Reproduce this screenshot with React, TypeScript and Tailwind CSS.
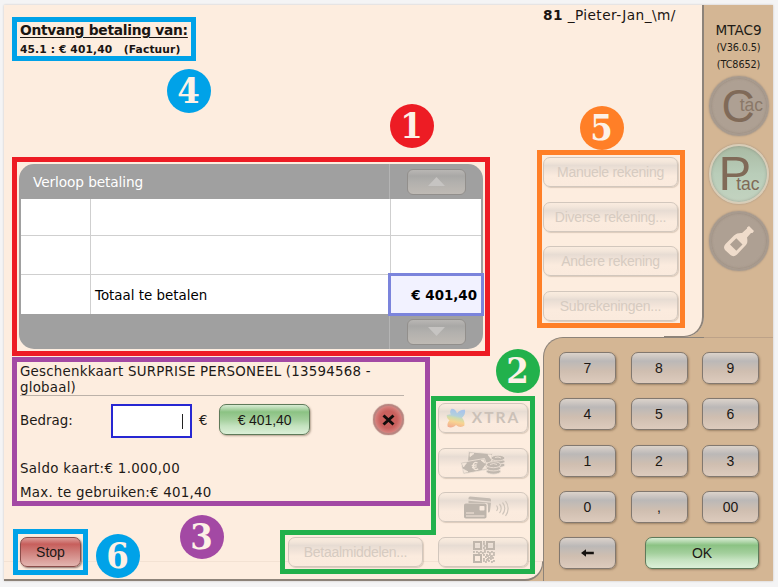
import React from "react";

const verdana = "font-['DejaVu_Sans',Verdana,sans-serif]";
const arial = "font-['Liberation_Sans',Arial,sans-serif]";

const greyKey =
  "border border-[#82786f] bg-[linear-gradient(#dcd3ca_0%,#d0c9c4_10%,#bbb8b7_27%,#c6bcb4_45%,#cfbeb0_60%,#ddcbbd_100%)] shadow-[1px_1px_2px_rgba(90,70,50,0.45)]";
const greenKey =
  "border border-[#5f7a5a] bg-[linear-gradient(#d8ecd4_0%,#b4d8ae_12%,#8bc283_24%,#a3cf9c_50%,#c4e2bf_72%,#dcf0d8_100%)] shadow-[1px_1px_2px_rgba(90,70,50,0.45)]";
const fadedKey =
  "border border-[#d2c7bd] bg-[linear-gradient(#faecdf_0%,#f3e6da_14%,#e7dcd3_27%,#f1e3d8_45%,#fbebde_65%,#faeadd_100%)] shadow-[1px_1px_1px_rgba(120,100,80,0.25)]";

function Key({ children, tone = greyKey, className = "" }: { children: React.ReactNode; tone?: string; className?: string }) {
  return (
    <button
      className={`flex items-center justify-center whitespace-nowrap rounded-[7px] text-[14px] leading-none text-[#1c1815] ${arial} ${tone} ${className}`}
    >
      {children}
    </button>
  );
}

function Badge({ n, className }: { n: number; className: string }) {
  return (
    <div
      className={`absolute z-30 flex size-[43.5px] items-center justify-center rounded-full text-[36px] font-bold leading-none text-[#fdf1e6] font-['DejaVu_Serif',serif] ${className}`}
    >
      <span className="-mt-px scale-x-90">{n}</span>
    </div>
  );
}

function Marker({ className }: { className: string }) {
  return <div className={`pointer-events-none absolute z-20 border-[5px] ${className}`} />;
}

function XtraMark() {
  return (
    <svg width="20" height="20" viewBox="0 0 20 20">
      <defs>
        <linearGradient id="petals" x1="0.2" y1="0" x2="0" y2="1">
          <stop offset="0" stopColor="#a9c4ea" />
          <stop offset="0.3" stopColor="#b3d0dc" />
          <stop offset="0.42" stopColor="#cfdcae" />
          <stop offset="0.62" stopColor="#f8d592" />
          <stop offset="1" stopColor="#f1a58f" />
        </linearGradient>
      </defs>
      <path
        d="M5.500.8C8 .5 10.200 2.500 11 5.300 13 2.500 16 1.300 19 1.800c.6 3-.5 6-3 8 2 2 3 5.200 2.300 8-2.500 1.700-6 1.400-8.300-.8-2 2.500-5.500 3-8.300 1.800C1 16.500 1.800 14 3.500 12.200 1.500 11 .5 9 .8 7c1.300-.7 2.800-.7 4-.4C3.700 4.800 4 2.300 5.500.8z"
        fill="url(#petals)"
      />
    </svg>
  );
}

function CashIcon() {
  return (
    <svg width="46" height="24" viewBox="0 0 46 24">
      <g fill="#c1b8af" stroke="#f3e6da" strokeWidth="0.8">
        <path d="m8.500.8 24 2-1 9.500-24-2z" />
        <path d="m10 2.300 4 .3-4 3zM28 3.700l3.300.3-.4 3.500z" fill="#f3e6da" />
        <ellipse cx="38" cy="14" rx="7" ry="2.500" />
        <ellipse cx="38" cy="10.500" rx="7" ry="2.500" />
        <ellipse cx="38" cy="7" rx="7" ry="2.800" />
        <path d="M.8 11.500 24.500 7.500 28 18.500 3.500 23z" />
        <path d="m2.300 12.500 4.200-.7-3 4.200zM21 9.200l2.700-.4 1 3.200zM4.200 21.500l3.800-.7-4.700-2.600zM22.500 18.300l3.800-.8-1-3z" fill="#f3e6da" />
        <ellipse cx="33.500" cy="20.500" rx="7.200" ry="2.700" />
        <ellipse cx="33.500" cy="17.200" rx="7.200" ry="2.700" />
        <ellipse cx="33.500" cy="13.700" rx="7.200" ry="3" />
      </g>
      <path d="M35 6.500q3-1.300 6 .5M30 13.500q3.500-2 7 0" fill="none" stroke="#f3e6da" strokeWidth="0.8" />
      <path d="M17.500 12c-2-1.500-4.500-.2-4.300 3.200.2 3.300 3 4.400 5 2.600M11.700 14.700l5-.8M12 16.600l4.700-.8" fill="none" stroke="#f3e6da" strokeWidth="1.200" />
    </svg>
  );
}

function CardIcon() {
  return (
    <svg width="46" height="23" viewBox="0 0 46 23">
      <path d="M7 .5 26.500 2.300q1.500.2 1.500 1.700v1.500L5.500 3.300V2Q5.800.5 7 .5z" fill="#c4bbb2" />
      <path d="M5.500 4.800 28 6.800 27 15q-.3 1.500-2 1.500V9q0-2-2-2H5.500z" fill="#c4bbb2" />
      <rect x="1" y="7.500" width="22.500" height="15" rx="1.800" fill="#beb5ac" />
      <rect x="16.500" y="10" width="5" height="4.500" rx="0.800" fill="#f6e8dc" />
      <path d="M3 17h8M3 20h18.500" stroke="#f6e8dc" strokeWidth="1.100" />
      <path d="M33.500 9.500c1.200 1.500 1.200 4 0 5.500M36.500 8c2.200 2.500 2.200 6.500 0 9M39.500 6.500c3 3.500 3 8.500 0 12M42.500 5c3.500 4.500 3.500 10.500 0 15" fill="none" stroke="#cfc5bb" strokeWidth="1.200" />
    </svg>
  );
}

const qrCells = [
  [10, 0], [10, 2], [11, 4], [10, 6], [11, 8], [0, 10], [3, 10], [5, 11], [7, 10], [9, 11], [11, 10],
  [14, 10], [16, 11], [18, 10], [20, 11], [14, 14], [16, 13], [18, 14], [20, 13], [12, 15], [15, 16],
  [17, 17], [19, 16], [13, 18], [15, 19], [20, 19], [18, 20], [10, 19], [12, 20], [10, 17], [10, 13], [17, 15], [13, 13], [14, 17],
];

function QrIcon() {
  return (
    <svg width="22" height="22" viewBox="0 0 22 22" fill="#c6bcb2">
      {[[0, 0], [13, 0], [0, 13]].map(([x, y]) => (
        <rect key={`${x}-${y}`} x={x + 1} y={y + 1} width="7" height="7" fill="none" stroke="#c0b6ac" strokeWidth="2" />
      ))}
      {qrCells.map(([x, y]) => (
        <rect key={`${x}.${y}`} x={x} y={y} width="1.900" height="1.900" />
      ))}
    </svg>
  );
}

function ScrollKey({ down = false }: { down?: boolean }) {
  return (
    <div className="flex h-[26px] w-[59px] items-center justify-center rounded-[6px] border border-[#928f8c] bg-[linear-gradient(#b9b7b4_0%,#a9a8a6_25%,#b2b0ad_50%,#bfbab4_100%)]">
      <svg width="17" height="9" viewBox="0 0 17 9" fill="#c6c4c2">
        <path d={down ? "M0 0h17L8.500 9z" : "M0 9h17L8.500 0z"} />
      </svg>
    </div>
  );
}

function PaymentTable() {
  return (
    <div className="-ml-px flex h-[185px] w-[464px] flex-col rounded-[15px] bg-[#a0a0a0]">
      <div className="flex h-[35px]">
        <div className="w-[371px] border-r border-[#b4b4b4] pl-[14px] text-[13.700px] leading-[36px] tracking-[-0.1px] text-white">
          Verloop betaling
        </div>
        <div className="flex flex-1 items-center justify-center">
          <ScrollKey />
        </div>
      </div>
      <div className="mx-[2px] grid h-[115px] grid-cols-[70px_300px_1fr] grid-rows-[37px_39px_39px] bg-white text-[13.4px] text-black">
        <div className="border-r border-b border-[#cfcfcf]" />
        <div className="border-r border-b border-[#cfcfcf]" />
        <div className="border-b border-[#cfcfcf]" />
        <div className="border-r border-b border-[#cfcfcf]" />
        <div className="border-r border-b border-[#cfcfcf]" />
        <div className="border-b border-[#cfcfcf]" />
        <div className="border-r border-[#cfcfcf]" />
        <div className="pl-1 leading-[41px]">Totaal te betalen</div>
        <div className="relative z-10 -mt-[2px] -mr-[3px] -ml-[3px] -mb-[2px] border-[3px] border-[#7b84dc] bg-[#f2f2ff] pr-1 text-right font-bold leading-[39px]">
          € 401,40
        </div>
      </div>
      <div className="flex h-[35px]">
        <div className="w-[371px] border-r border-[#b4b4b4]" />
        <div className="flex flex-1 items-center justify-center">
          <ScrollKey down />
        </div>
      </div>
    </div>
  );
}

function GiftCard() {
  return (
    <div className="h-[174px] w-[384px] pt-[15px] text-[13.4px] tracking-[0.25px] text-[#1e1a17]">
      <p className="h-[32px] whitespace-nowrap border-b border-[#bcb2a9] leading-4 tracking-[0.220px]">
        Geschenkkaart SURPRISE PERSONEEL (13594568 -<br />
        globaal)
      </p>
      <div className="mt-2 flex h-[34px]">
        <span className="w-[91px] leading-[33px] tracking-normal">Bedrag:</span>
        <div className="flex h-[34px] w-[81px] items-center justify-end border-2 border-[#2727d2] bg-white pr-[7px]">
          <span className="h-[15px] w-px bg-[#222]" />
        </div>
        <span className="ml-[7px] w-[20px] leading-[33px]">€</span>
        <Key tone={greenKey} className="h-[31px] w-[91px] tracking-[-0.1px]">€ 401,40</Key>
        <button className="ml-auto flex size-[31px] items-center justify-center rounded-full border-2 border-[#b98580] bg-[radial-gradient(#c9605d_45%,#d98a86_75%)] shadow-[0_0_1px_#7d4a47]">
          <svg width="13" height="12" viewBox="0 0 13 12" stroke="#110c0b" strokeWidth="3">
            <path d="m1.500 1.500 10 9m0-9-10 9" />
          </svg>
        </button>
      </div>
      <p className="mt-[19px] leading-6 tracking-[0.320px]">Saldo kaart:€ 1.000,00</p>
      <p className="leading-6">Max. te gebruiken:€ 401,40</p>
    </div>
  );
}

function RoundKey({ children, className = "" }: { children: React.ReactNode; className?: string }) {
  return (
    <div
      className={`size-[60px] overflow-hidden rounded-full border-2 shadow-[0_0_2px_#9b8a7b,inset_0_0_3px_rgba(100,85,75,0.4)] ${arial} text-[#806a58] ${className}`}
    >
      {children}
    </div>
  );
}

const brownDisc = "border-[#a79a8e] bg-[radial-gradient(#aea093_60%,#b7a99b_100%)]";

function Sidebar() {
  return (
    <aside className="relative flex flex-1 flex-col items-center pt-[16px] text-[#211b16]">
      <span className="text-[13.6px] leading-[18px]">MTAC9</span>
      <span className="mt-px text-[9.700px] leading-4 tracking-[-0.1px]">(V36.0.5)</span>
      <span className="mt-px text-[9.700px] leading-4 tracking-[-0.1px]">(TC8652)</span>
      <RoundKey className={`mt-[3px] ${brownDisc}`}>
        <span className="ml-[11px] flex h-[56px] items-center text-[46px] leading-none">
          C<span className="-ml-[15px] text-[17.500px] text-[#8a7868]">tac</span>
        </span>
      </RoundKey>
      <RoundKey className="mt-2 border-[#d8cdb8] bg-[linear-gradient(#a9baa3,#b9cdb9_50%,#c3d3c0)]">
        <span className="ml-[8px] flex h-[55px] items-center text-[49px] leading-none">
          P<span className="-ml-[15px] mt-[23px] text-[17.500px]">tac</span>
        </span>
      </RoundKey>
      <RoundKey className={`mt-[7px] flex items-center justify-center ${brownDisc}`}>
        <svg width="34" height="34" viewBox="0 0 34 34">
          <path
            d="M27 2 32 7 30.500 9 29 9 25 13.500C26 18 25 20 23 22L15 30.500Q11.500 33.500 8.500 31L3 26Q.8 23 3.500 20L12 11.500C14 9.500 17 8.800 20 9L25 4.500 25 3.500z"
            fill="#efdccb"
          />
          <path d="m8 20.500 6.300-6.200 6.200 6.200-6.200 6.300z" fill="#aea093" />
        </svg>
      </RoundKey>
      <div className="absolute -bottom-px left-0 right-0 z-10 h-px bg-[#bda288]" />
    </aside>
  );
}

function Keypad() {
  return (
    <div className="h-[244px] bg-[#fdeddf]">
      <div className="grid h-full grid-cols-[57px_57px_57px] content-start gap-x-[14.500px] gap-y-[14.250px] rounded-tl-[20px] border-t border-l border-[#8d8379] bg-[#d4b694] pt-[14px] pl-[15px]">
        {["7", "8", "9", "4", "5", "6", "1", "2", "3", "0", ",", "00"].map((k) => (
          <Key key={k} className="h-[32px] w-[57px]">{k}</Key>
        ))}
        <Key className="h-[32px] w-[57px]">
          <svg width="13" height="8" viewBox="0 0 13 8">
            <path d="M0 4 5 .3V2.800h7.800v2.400H5v2.500z" fill="#15110e" />
          </svg>
        </Key>
        <Key tone={greenKey} className="col-span-2 ml-auto h-[32px] w-[114px] tracking-[-0.2px]">OK</Key>
      </div>
    </div>
  );
}

export default function App() {
  return (
    <main className={`relative h-[587px] w-[778px] overflow-hidden bg-[#f4f4f5] pt-[5px] pl-1 ${verdana}`}>
      <div className="flex h-[576px] w-[769px] bg-[#d4b694] shadow-[0_0_2px_#c9c5c1]">
        <section className="w-[539px]">
          <div className="relative z-10 h-[556px] bg-[#fdeddf] pt-[15px] pl-4">
            <h1 className="whitespace-nowrap text-[13.800px] font-bold leading-5 tracking-[-0.280px] text-[#1b1512] underline underline-offset-2">Ontvang betaling van:</h1>
            <p className="mt-[2px] whitespace-pre text-[10.700px] font-bold leading-4 tracking-[0.120px] text-[#1b1512]">45.1 : € 401,40   (Factuur)</p>
            <div className="mt-[106px]">
              <PaymentTable />
            </div>
            <div className="flex">
              <div className="w-[418px]">
                <GiftCard />
                <div className="mt-[14px] flex">
                  <Key
                    tone="border border-[#8a4d4a] bg-[linear-gradient(#dc9c98_0%,#c75f5c_22%,#cf7f7b_50%,#e3b5b0_100%)] shadow-[1px_1px_2px_rgba(60,30,30,0.6)]"
                    className="h-[30px] w-[61px]"
                  >
                    Stop
                  </Key>
                  <Key tone={fadedKey} className="ml-[207px] h-[30px] w-[135px]">
                    <span className="tracking-[-0.280px] text-[#d6cbc1]">Betaalmiddelen...</span>
                  </Key>
                </div>
              </div>
              <div className="mt-[54px] flex flex-col gap-[14.700px]">
                <Key tone={fadedKey} className="h-[30px] w-[90px] gap-[6px]">
                  <XtraMark />
                  <span className="font-['Lato',sans-serif] text-[15.500px] font-bold tracking-[2px] text-[#cbc1b8]">XTRA</span>
                </Key>
                <Key tone={fadedKey} className="h-[30px] w-[90px]"><CashIcon /></Key>
                <Key tone={fadedKey} className="h-[30px] w-[90px]"><span className="ml-[5px]"><CardIcon /></span></Key>
                <Key tone={fadedKey} className="h-[30px] w-[90px]"><span className="ml-[2px]"><QrIcon /></span></Key>
              </div>
            </div>
          </div>
          <div className="h-5 rounded-br-[18px] border-t border-b-2 border-r border-t-[#f3e2d3] border-r-[#8d8379] border-b-[#8d8379] bg-[#fdeddf]" />
        </section>
        <section className="w-[230px]">
          <div className="flex h-[332px]">
            <div className="w-[161px]">
              <div className="relative z-10 h-[312px] border-r-2 border-[#8d8379] bg-[#fdeddf]">
                <p className="h-[152px] whitespace-pre text-[13.700px] leading-5 tracking-[0.420px] text-[#1b1512]"><b>81</b> _Pieter-Jan_\m/</p>
                <div className="flex flex-col gap-[14.700px]">
                  {["Manuele rekening", "Diverse rekening...", "Andere rekening", "Subrekeningen..."].map((t) => (
                    <Key key={t} tone={fadedKey} className="h-[30px] w-[135px]">
                      <span className="tracking-[-0.280px] text-[#d6cbc1]">{t}</span>
                    </Key>
                  ))}
                </div>
              </div>
              <div className="h-5 rounded-br-[20px] bg-[#fdeddf]">
                <div className="ml-auto h-full w-[40px] rounded-br-[20px] border-r-2 border-b border-[#8d8379]" />
              </div>
            </div>
            <Sidebar />
          </div>
          <Keypad />
        </section>
      </div>

      <Marker className="left-[12px] top-[17px] h-[44px] w-[184px] border-[#00a2e8]" />
      <Marker className="left-[12px] top-[157px] h-[199px] w-[478px] border-[#ed1c24]" />
      <Marker className="left-[12px] top-[357px] h-[149px] w-[418px] border-[#a349a4]" />
      <Marker className="left-[537px] top-[150px] h-[178px] w-[148px] border-[#ff7f27]" />
      <Marker className="left-[13px] top-[529px] h-[46px] w-[75px] border-[#00a2e8]" />
      <svg className="pointer-events-none absolute left-[280px] top-[396px] z-20" width="255" height="178" viewBox="0 0 255 178">
        <path d="M153.500 2.500h99v173H2.500v-39h151z" fill="none" stroke="#22b14c" strokeWidth="5" />
      </svg>

      <Badge n={1} className="left-[390px] top-[104px] bg-[#ed1c24]" />
      <Badge n={2} className="left-[496px] top-[349px] bg-[#22b14c]" />
      <Badge n={3} className="left-[180px] top-[515px] bg-[#a349a4]" />
      <Badge n={4} className="left-[167px] top-[69px] bg-[#00a2e8]" />
      <Badge n={5} className="left-[580px] top-[106px] bg-[#ff7f27]" />
      <Badge n={6} className="left-[96px] top-[534px] bg-[#00a2e8]" />
    </main>
  );
}
